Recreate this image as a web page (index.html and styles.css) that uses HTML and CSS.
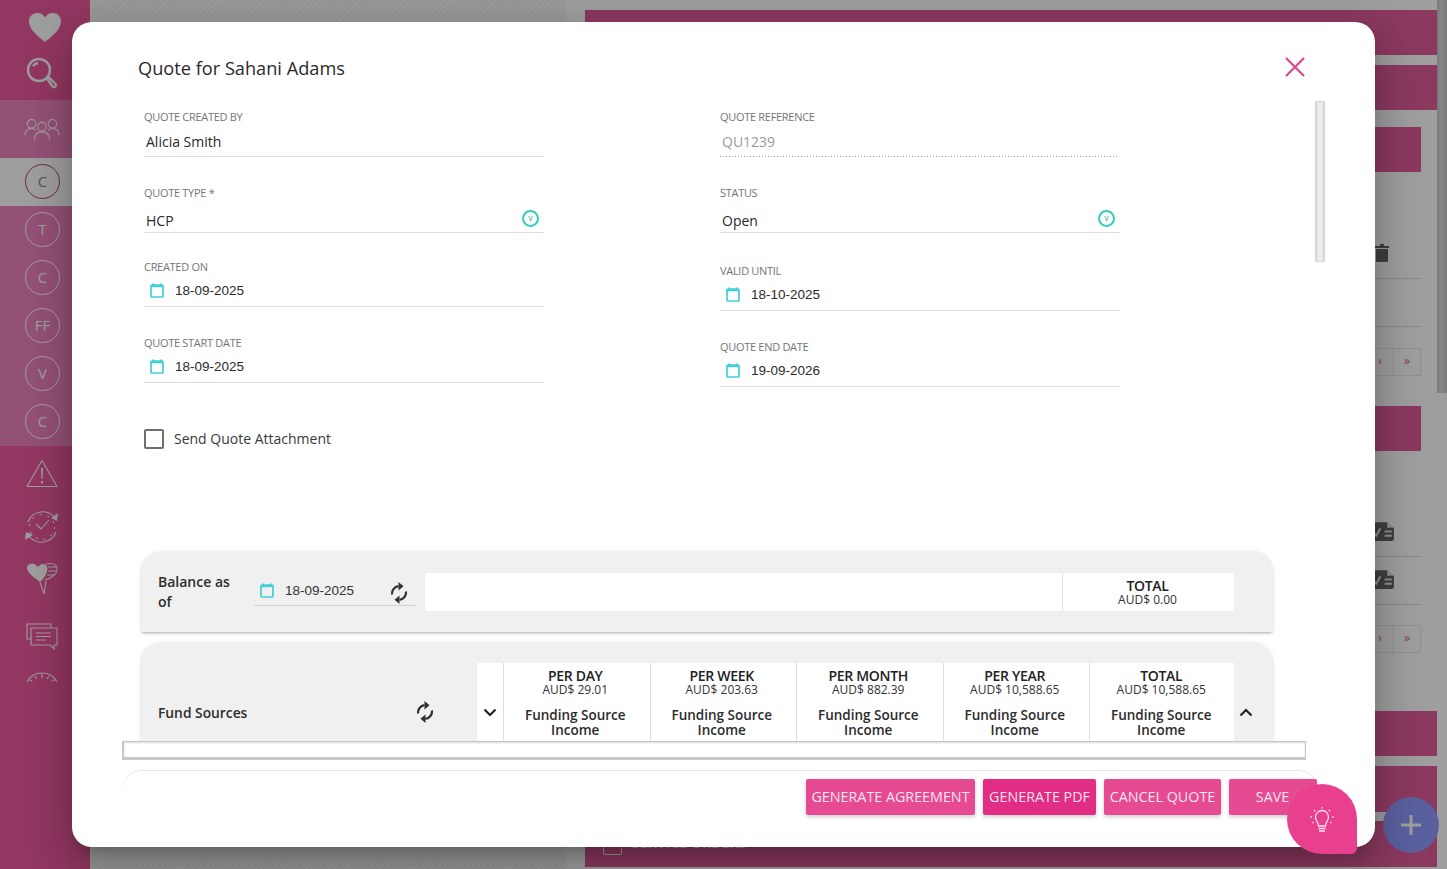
FILE: index.html
```html
<!DOCTYPE html>
<html lang="en">
<head>
<meta charset="utf-8">
<title>Quote for Sahani Adams</title>
<link rel="stylesheet" href="styles.css">
</head>
<body>
<svg class="defs" width="0" height="0" aria-hidden="true">
  <defs>
    <symbol id="cal" viewBox="0 0 14 15"><path d="M3 0.5v2M11 0.5v2" fill="none" stroke="currentColor" stroke-width="2"/><rect x="1" y="2" width="12" height="12" rx="1" fill="none" stroke="currentColor" stroke-width="1.7"/><rect x="1" y="2" width="12" height="2.2" fill="currentColor"/></symbol>
    <symbol id="sync" viewBox="0 0 24 24"><path d="M5 13.5A7.5 7.5 0 0 1 11.5 5.2M19 10.5A7.5 7.5 0 0 1 12.5 18.8" fill="none" stroke="currentColor" stroke-width="2.2"/><path d="M11.5 1L16.5 5.2L11.5 9.4ZM12.5 14.6L7.5 18.8L12.5 23Z" fill="currentColor"/></symbol>
    <symbol id="doc" viewBox="0 0 24 20"><path d="M3 1H16L23 7V17A2 2 0 0 1 21 19H3A2 2 0 0 1 1 17V3A2 2 0 0 1 3 1Z" fill="currentColor"/><path d="M16.500 1.500L22 6.500H16.500Z" fill="#e8e8e8"/><path d="M14 10H21M14 14H21" stroke="#e8e8e8" stroke-width="2"/><path d="M3 11L6 14L10 7" fill="none" stroke="#e8e8e8" stroke-width="2"/></symbol>
  </defs>
</svg>

<div class="app">
  <nav class="sidebar">
    <div class="nav-top">
      <div class="nav-icon heart-row">
        <svg width="34" height="31" viewBox="0 0 34 31"><path class="solid" d="M17 30C11 25 1 18 1 9.500C1 4 5 1 9.500 1C13 1 15.500 3 17 5.500C18.500 3 21 1 24.500 1C29 1 33 4 33 9.500C33 18 23 25 17 30Z"/></svg>
      </div>
      <div class="nav-icon search-row">
        <svg width="32" height="32" viewBox="0 0 32 32"><g class="line thick"><circle cx="13" cy="13" r="11"/><path d="M7 9A7.500 7.500 0 0 1 12 6"/><path d="M20.500 21L22 19.500L29.500 27C30.500 28 30 29 29 29.800C28 30.500 27.200 30.200 26.500 29.500Z"/></g></svg>
      </div>
    </div>
    <div class="nav-soft">
      <div class="nav-icon group-row">
        <svg width="36" height="23" viewBox="0 0 38 24"><g class="line"><circle cx="8" cy="6" r="4.500"/><circle cx="19" cy="9" r="4.500"/><circle cx="30" cy="6" r="4.500"/><path d="M1 18C1 13 4 11 8 11C10 11 11.500 11.500 13 13"/><path d="M37 18C37 13 34 11 30 11C28 11 26.500 11.500 25 13"/><path d="M11 23C11 17 14 14.500 19 14.500C24 14.500 27 17 27 23"/></g></svg>
      </div>
      <div class="nav-circle is-active"><span>C</span></div>
      <div class="nav-circle"><span>T</span></div>
      <div class="nav-circle"><span>C</span></div>
      <div class="nav-circle"><span>FF</span></div>
      <div class="nav-circle"><span>V</span></div>
      <div class="nav-circle"><span>C</span></div>
    </div>
    <div class="nav-bottom">
      <svg class="ico-warn" width="32" height="29" viewBox="0 0 32 29"><g class="line"><path d="M16 1.500L31 27.500H1Z" stroke-linejoin="round"/></g><path class="solid" d="M15 9H17L16.600 20H15.400ZM15 22H17V24.500H15Z"/></svg>
      <svg class="ico-clock" width="36" height="36" viewBox="0 0 36 36"><g class="line"><path d="M4 13A15.500 15.500 0 0 1 31 9"/><path d="M32 23A15.500 15.500 0 0 1 5 27"/><circle cx="18" cy="18" r="12.500" stroke-dasharray="2 6"/><path d="M12 15L17 20L25 11"/></g><path class="solid" d="M34 4L33 12L27 9ZM1 31L2 23L9 26Z"/></svg>
      <svg class="ico-balloon" width="32" height="33" viewBox="0 0 32 33"><path class="solid" d="M14 20C9 16 1 11 1 6C1 2 5 1 8 2C10 3 11 4 12 5C14 2 18 1 20 3C22 5 22 8 20 12C19 15 16 18 14 20Z"/><g class="line"><path d="M20 2C25 1 30 2 31 6C31.500 9 30 12 27 14C25 15.500 22 17 19 18"/><path d="M22 5H30M22 9H31M21 13H28"/><path d="M14 20L18 32L20 19"/></g></svg>
      <svg class="ico-chat" width="32" height="27" viewBox="0 0 32 27"><g class="line"><path d="M5 16H1V1H25V5"/><path d="M5 5H31V22H28V26L24 22H5Z"/><path d="M10 10H25M10 13.500H25M10 17H20"/></g></svg>
      <svg class="ico-gauge" width="32" height="10" viewBox="0 0 32 10"><g class="line"><path d="M1 10A17 17 0 0 1 31 10"/><path d="M16 2V6M9 4L11 7M23 4L21 7M4 8L6 9M28 8L26 9"/></g></svg>
    </div>
  </nav>

  <aside class="hatch"></aside>

  <main class="content">
    <div class="bar"></div>
    <div class="bar"></div>
    <section class="section first">
      <div class="bar"></div>
      <div class="row trash-row">
        <svg class="trash" width="14" height="18" viewBox="0 0 14 18"><path d="M0 2H5V0H9V2H14V4H0ZM1 5H13V16.500A1.500 1.500 0 0 1 11.500 18H2.500A1.500 1.500 0 0 1 1 16.500Z"/></svg>
      </div>
      <div class="row empty-row"></div>
      <div class="pager"><span class="pg"></span><span class="pg">›</span><span class="pg hot">»</span></div>
    </section>
    <section class="section second">
      <div class="bar"></div>
      <div class="row doc-row top"><svg class="doc" width="25" height="21"><use href="#doc"/></svg></div>
      <div class="row doc-row"><svg class="doc" width="25" height="21"><use href="#doc"/></svg></div>
      <div class="pager low"><span class="pg"></span><span class="pg">›</span><span class="pg hot">»</span></div>
    </section>
    <div class="bar"></div>
    <div class="bar tall"><span class="bg-check"></span><span class="bg-title">SERVICE ORDERS</span></div>
  </main>

  <div class="page-scroll"><div class="page-thumb"></div></div>
  <div class="fab-tab"></div>
  <div class="fab"><svg width="24" height="24" viewBox="0 0 24 24"><path d="M12 2V22M2 12H22" stroke="#fff" stroke-width="3"/></svg></div>
</div>

<div class="backdrop"></div>

<div class="modal">
  <header class="modal-head">
    <h1 class="modal-title">Quote for Sahani Adams</h1>
    <svg class="close" width="22" height="22" viewBox="0 0 22 22"><path d="M2 2L20 20M20 2L2 20" stroke="#e0468c" stroke-width="2.200"/></svg>
  </header>

  <div class="modal-main">
    <div class="scroll-area">
      <form class="form">
        <div class="form-col">
          <div class="field">
            <label class="label">QUOTE CREATED BY</label>
            <div class="control text">Alicia Smith</div>
          </div>
          <div class="field">
            <label class="label">QUOTE TYPE *</label>
            <div class="control select"><span>HCP</span><span class="select-ico">v</span></div>
          </div>
          <div class="field pull">
            <label class="label">CREATED ON</label>
            <div class="control date"><svg class="cal" width="14" height="15"><use href="#cal"/></svg><span>18-09-2025</span></div>
          </div>
          <div class="field">
            <label class="label">QUOTE START DATE</label>
            <div class="control date"><svg class="cal" width="14" height="15"><use href="#cal"/></svg><span>18-09-2025</span></div>
          </div>
          <div class="check-row"><span class="check"></span><span class="check-text">Send Quote Attachment</span></div>
        </div>
        <div class="form-col">
          <div class="field">
            <label class="label">QUOTE REFERENCE</label>
            <div class="control text disabled">QU1239</div>
          </div>
          <div class="field">
            <label class="label">STATUS</label>
            <div class="control select"><span>Open</span><span class="select-ico">v</span></div>
          </div>
          <div class="field push">
            <label class="label">VALID UNTIL</label>
            <div class="control date"><svg class="cal" width="14" height="15"><use href="#cal"/></svg><span>18-10-2025</span></div>
          </div>
          <div class="field">
            <label class="label">QUOTE END DATE</label>
            <div class="control date"><svg class="cal" width="14" height="15"><use href="#cal"/></svg><span>19-09-2026</span></div>
          </div>
        </div>
      </form>

      <section class="panel balance">
        <div class="balance-label">Balance as of</div>
        <div class="balance-date">
          <svg class="cal" width="14" height="15"><use href="#cal"/></svg><span>18-09-2025</span>
          <svg class="sync small" width="24" height="24"><use href="#sync"/></svg>
        </div>
        <div class="white-box"></div>
        <div class="total-cell"><div class="cell-head">TOTAL</div><div class="cell-amt">AUD$ 0.00</div></div>
      </section>

      <section class="panel funds">
        <div class="fund-label"><span>Fund Sources</span><svg class="sync" width="24" height="24"><use href="#sync"/></svg></div>
        <div class="fund-table">
          <div class="chev-cell"><svg width="14" height="9" viewBox="0 0 14 9"><path d="M1.500 1.500L7 7L12.500 1.500" fill="none" stroke="#222" stroke-width="2.200"/></svg></div>
          <div class="fund-cell"><div class="cell-head">PER DAY</div><div class="cell-amt">AUD$ 29.01</div><div class="cell-sub">Funding Source Income</div></div>
          <div class="fund-cell"><div class="cell-head">PER WEEK</div><div class="cell-amt">AUD$ 203.63</div><div class="cell-sub">Funding Source Income</div></div>
          <div class="fund-cell"><div class="cell-head">PER MONTH</div><div class="cell-amt">AUD$ 882.39</div><div class="cell-sub">Funding Source Income</div></div>
          <div class="fund-cell"><div class="cell-head">PER YEAR</div><div class="cell-amt">AUD$ 10,588.65</div><div class="cell-sub">Funding Source Income</div></div>
          <div class="fund-cell"><div class="cell-head">TOTAL</div><div class="cell-amt">AUD$ 10,588.65</div><div class="cell-sub">Funding Source Income</div></div>
        </div>
        <div class="chev-up"><svg width="14" height="9" viewBox="0 0 14 9"><path d="M1.500 7.500L7 2L12.500 7.500" fill="none" stroke="#222" stroke-width="2.200"/></svg></div>
      </section>
    </div>
    <div class="v-scroll"><div class="v-thumb"></div></div>
  </div>

  <div class="h-scroll"></div>

  <footer class="modal-foot">
    <button class="btn" type="button">GENERATE AGREEMENT</button>
    <button class="btn hover" type="button">GENERATE PDF</button>
    <button class="btn" type="button">CANCEL QUOTE</button>
    <button class="btn save" type="button">SAVE</button>
  </footer>

  <div class="leaf">
    <svg width="26" height="27" viewBox="0 0 26 27"><g fill="none" stroke="#fbe3ee" stroke-width="1.300"><path d="M9.500 20C9.500 16 6.500 15 6.500 11A6.500 6.500 0 0 1 19.500 11C19.500 15 16.500 16 16.500 20Z"/><path d="M9.500 22.500H16.500M10 25H16M13 1V2.500M5 4L6.200 5.200M21 4L19.800 5.200M1.500 11H3M23 11H24.500M3.500 17L4.700 16M22.500 17L21.300 16"/></g></svg>
  </div>
</div>
</body>
</html>
```
FILE: styles.css
```css
* { box-sizing: border-box; }
html, body { margin: 0; padding: 0; height: 869px; overflow: hidden; }
body { background: #fff; font-family: "Open Sans", "Liberation Sans", sans-serif; color: #222; position: relative; }
.defs { position: absolute; }

/* background application */
.app { display: flex; height: 869px; }
.sidebar { width: 90px; flex: none; background: #ec599d; display: flex; flex-direction: column; height: 869px; overflow: hidden; }
.nav-top { height: 100px; display: flex; flex-direction: column; }
.nav-icon { display: flex; align-items: center; justify-content: center; }
.heart-row { height: 54px; }
.search-row { height: 38px; padding-right: 6px; }
.group-row { height: 58px; padding-right: 6px; }
.nav-soft { height: 346px; background: #ee84be; display: flex; flex-direction: column; }
.nav-circle { height: 48px; display: flex; align-items: center; padding: 0 0 2px 25px; }
.nav-circle span { width: 35px; height: 35px; border-radius: 50%; border: 1px solid #fff; color: #fff; display: flex; align-items: center; justify-content: center; font-size: 15px; }
.nav-circle.is-active { background: #fff; }
.nav-circle.is-active span { border-color: #b0426f; color: #8a8a8a; }
.nav-bottom { flex: 1; display: flex; flex-direction: column; padding-left: 26px; }
.nav-bottom svg { display: block; flex: none; }
.ico-warn { margin-top: 13px; }
.ico-clock { margin: 21px 0 0 -2px; }
.ico-balloon { margin-top: 17px; }
.ico-chat { margin-top: 28px; }
.ico-gauge { margin-top: 22px; }
.line { fill: none; stroke: #fff; stroke-width: 1.1; }
.line.thick { stroke-width: 2.4; }
.solid { fill: #fff; }

.hatch { width: 475px; flex: none; background: repeating-linear-gradient(135deg, #f2f2f2 0 2px, #fafafa 2px 4px); height: 869px; }
.content { width: 852px; flex: none; margin-left: 20px; padding-top: 10px; }
.bar { height: 45px; background: #e35c9a; margin-bottom: 10px; }
.bar.tall { height: 101px; margin-bottom: 0; padding: 72px 0 0 18px; display: flex; gap: 10px; }
.bg-check { width: 19px; height: 17px; border: 1px solid #fff; border-radius: 2px; flex: none; }
.bg-title { color: #fff; font-size: 14px; font-weight: 700; line-height: 10px; }
.section { padding-right: 16px; }
.section .bar { margin-bottom: 0; }
.section.first { margin-top: 17px; height: 279px; }
.section.second { height: 305px; }
.row { display: flex; justify-content: flex-end; align-items: flex-end; border-bottom: 1px solid #dcdcdc; }
.trash-row { height: 107px; padding: 0 32px 16px 0; }
.trash { fill: #666; }
.empty-row { height: 48px; }
.pager { display: flex; justify-content: flex-end; margin-top: 21px; }
.pg { width: 28px; height: 28px; border: 1px solid #e8e8e8; margin-left: -1px; display: flex; align-items: center; justify-content: center; color: #e35c9a; font-size: 13px; padding-bottom: 4px; }
.doc-row { height: 48px; padding: 0 26px 14px 0; }
.doc-row.top { height: 106px; }
.doc { color: #666; }
.pager.low { margin-top: 20px; }

.page-scroll { width: 10px; flex: none; height: 869px; background: #fff; }
.page-thumb { height: 393px; background: linear-gradient(90deg, #c4c4c4, #dcdcdc 40%, #c4c4c4); }
.fab { position: absolute; left: 1383px; top: 797px; width: 56px; height: 56px; border-radius: 50%; background: #929cff; display: flex; align-items: center; justify-content: center; }
.fab-tab { position: absolute; left: 1375px; top: 812px; width: 20px; height: 9px; background: #fff; }

.backdrop { position: absolute; inset: 0; background: rgba(0,0,0,.38); }

/* modal */
.modal { position: absolute; left: 72px; top: 22px; width: 1303px; height: 825px; background: #fff; border-radius: 20px; display: flex; flex-direction: column; box-shadow: 0 11px 15px -7px rgba(0,0,0,.2), 0 24px 38px 3px rgba(0,0,0,.14), 0 9px 46px 8px rgba(0,0,0,.12); }
.modal-head { height: 79px; flex: none; display: flex; align-items: flex-start; justify-content: space-between; padding: 33px 69px 0 66px; }
.modal-title { margin: 0; font-size: 18.200px; font-weight: 400; line-height: 26px; color: #2a2a2a; }
.close { margin-top: 1px; }
.modal-main { display: flex; height: 640px; flex: none; }
.scroll-area { width: 1243px; flex: none; overflow: hidden; padding-left: 69px; }
.v-scroll { width: 10px; flex: none; }
.v-thumb { height: 161px; background: linear-gradient(90deg, #d2d2d2, #eeeeee 30%, #eeeeee 70%, #d2d2d2); border: 1px solid #d8d8d8; }

.form { display: flex; gap: 176px; padding: 9px 0 0 3px; height: 450px; }
.form-col { width: 400px; display: flex; flex-direction: column; gap: 29px; }
.field { height: 47px; display: flex; flex-direction: column; flex: none; }
.field.pull { margin-top: -2px; }
.field.push { margin-top: 2px; }
.label { display: block; font-size: 11px; line-height: 14px; height: 14px; color: #757575; letter-spacing: -.3px; }
.control { height: 33px; border-bottom: 1px solid #dedede; display: flex; align-items: center; font-size: 14px; color: #2a2a2a; padding-left: 2px; }
.control.text { padding-top: 3px; }
.control.disabled { color: #9a9a9a; border-bottom: 0; padding-top: 1px; width: 397px; background: linear-gradient(90deg, #9a9a9a 1px, transparent 1px) left bottom / 3px 1px repeat-x; }
.control.select { justify-content: space-between; padding-top: 9px; position: relative; }
.select-ico { position: absolute; right: 5px; top: 10px; width: 17px; height: 17px; border: 2px solid #35c9c0; border-radius: 50%; font-size: 9px; line-height: 11px; text-align: center; color: #35a8a8; }
.control.date { padding-left: 6px; padding-top: 1px; gap: 11px; font-family: "Liberation Sans", sans-serif; font-size: 13.500px; }
.cal { color: #3fd0d8; flex: none; }
.check-row { margin-top: 17px; display: flex; align-items: center; gap: 10px; font-size: 14px; color: #3a3a3a; }
.check-text { margin-top: -1px; }
.check { width: 20px; height: 20px; border: 2px solid #6e6e6e; border-radius: 2px; flex: none; }

.panel { width: 1132px; background: #f0f0f0; border-radius: 20px 20px 0 0; box-shadow: 0 2px 3px -1px rgba(0,0,0,.32), 0 0 6px rgba(0,0,0,.05); display: flex; }
.balance { height: 81px; padding: 22px 0 0 17px; margin-bottom: 10px; }
.balance-label { width: 96px; flex: none; font-size: 14px; font-weight: 600; line-height: 20px; padding-right: 16px; margin-top: -1px; color: #2c2c2c; }
.balance-date { width: 162px; height: 33px; flex: none; display: flex; align-items: center; padding: 2px 5px 0 6px; margin-right: 9px; border-bottom: 1px solid #d4d4d4; font-family: "Liberation Sans", sans-serif; font-size: 13.500px; color: #333; gap: 11px; }
.balance-date .sync { margin-left: auto; margin-top: 5px; }
.white-box { width: 637px; height: 38px; background: #fff; flex: none; }
.total-cell { width: 172px; height: 38px; background: #fff; flex: none; border-left: 1px solid #ddd; text-align: center; padding: 6px 2px 0 0; }
.cell-head { font-size: 14px; font-weight: 600; line-height: 14px; color: #222; letter-spacing: -.3px; }
.cell-amt { font-size: 12px; line-height: 13px; color: #333; }
.funds { height: 130px; padding-top: 21px; }
.fund-label { width: 336px; height: 98px; flex: none; padding: 0 40px 0 17px; display: flex; align-items: center; justify-content: space-between; font-size: 13.800px; font-weight: 600; color: #2c2c2c; }
.fund-table { width: 757px; height: 98px; background: #fff; display: flex; flex: none; overflow: hidden; }
.chev-cell { width: 26px; flex: none; display: flex; align-items: center; justify-content: center; }
.fund-cell { width: 146.500px; flex: none; border-left: 1px solid #ddd; text-align: center; padding: 6px 3px 0 0; }
.cell-sub { font-size: 13.500px; font-weight: 600; line-height: 15px; margin-top: 12px; padding: 0 16px; color: #2c2c2c; }
.chev-up { width: 24px; height: 98px; flex: none; display: flex; align-items: center; justify-content: center; }

.h-scroll { width: 1184px; height: 19px; margin-left: 50px; flex: none; background: #fff; border: 1px solid #c8c8c8; border-width: 1px 1px 3px 2px; box-shadow: inset 0 1px 2px rgba(0,0,0,.15); }
.modal-foot { width: 1196px; height: 75px; margin: 10px 0 0 50px; flex: none; border-top: 1px solid #e6e6e6; border-radius: 20px 20px 0 0; display: flex; justify-content: flex-end; gap: 8px; padding: 8px 1px 0 0; }
.btn { height: 36px; border: 0; border-radius: 2px; background: #e64a92; color: rgba(255,255,255,.88); font-family: "Open Sans", sans-serif; font-size: 14.300px; padding: 0 4px 2px; box-shadow: 0 2px 4px rgba(0,0,0,.2); white-space: nowrap; }
.btn:nth-child(1) { width: 169px; }
.btn:nth-child(2) { width: 113px; }
.btn:nth-child(3) { width: 117px; }
.btn.hover { background: #e22d85; }
.btn.save { width: 88px; padding: 0 1px 2px 0; }
.leaf { position: absolute; left: 1215px; top: 762px; width: 70px; height: 70px; background: #e8408f; border-radius: 50% 50% 6px 50%; display: flex; align-items: center; justify-content: center; }
```
